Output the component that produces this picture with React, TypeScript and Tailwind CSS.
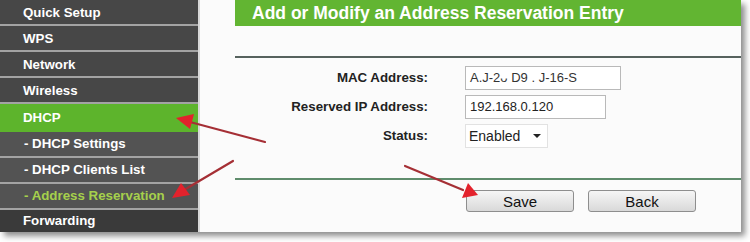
import React from 'react'

const font = { fontFamily: '"Liberation Sans", Arial, sans-serif' }

const topItems = ['Quick Setup', 'WPS', 'Network', 'Wireless']
const subItems = ['- DHCP Settings', '- DHCP Clients List', '- Address Reservation']

function Arrows() {
  return (
    <svg className="pointer-events-none absolute left-0 top-0" width="750" height="242" viewBox="0 0 750 242">
      <g stroke="#a52f35" strokeWidth="2.2" strokeLinecap="round">
        <line x1="265" y1="142" x2="190" y2="122" />
        <line x1="233" y1="161" x2="184" y2="190" />
        <line x1="405" y1="166" x2="463" y2="190" />
      </g>
      <g fill="#e3222c">
        <polygon points="176,118 194,114 190,129" />
        <polygon points="172,198 181,183 190,195" />
        <polygon points="478,195 462,198 468,183" />
      </g>
    </svg>
  )
}

export default function App() {
  return (
    <div className="relative h-[242px] w-[750px] overflow-hidden bg-white" style={font}>
      <div className="flex h-[232px] w-[741px] shadow-[4px_4px_6px_rgba(0,0,0,0.45)]">
        {/* sidebar */}
        <div className="flex w-[198px] flex-col bg-[#3d3d3d] text-[13.3px] font-bold text-white">
          {topItems.map((t) => (
            <div key={t} className="flex h-[26px] items-center border-b-2 border-[#a3a3a3] bg-[#474747] pl-[23px] pt-[1px]">
              {t}
            </div>
          ))}
          <div className="flex h-[28px] items-center bg-[#5db42c] pl-[23px]">DHCP</div>
          {subItems.map((t, i) => (
            <div
              key={t}
              className={
                i === 2
                  ? 'flex h-[26px] items-center border-b-2 border-[#a3a3a3] bg-[#535353] pl-[24px] text-[#a6d04c]'
                  : 'flex h-[26px] items-center border-b-2 border-[#a3a3a3] bg-[#535353] pl-[24px]'
              }
            >
              {t}
            </div>
          ))}
          <div className="flex h-[22px] items-center bg-[#3a3a3a] pl-[23px]">Forwarding</div>
        </div>
        <div className="w-[2px] bg-[#d8d8d8]" />
        {/* content */}
        <div className="flex flex-1 flex-col bg-[#fbfbfb] pl-[35px]">
          <div className="flex h-[26px] items-center bg-[#62b532] pl-[17px] text-[17.5px] font-bold text-white">
            Add or Modify an Address Reservation Entry
          </div>
          <div className="mt-[30px] h-[2px] bg-[#56625e]" />
          <div className="mt-[8px] flex flex-col gap-[5px] text-[13px]">
            <div className="flex items-center">
              <div className="w-[193px] text-right text-[13.3px] font-bold text-[#222]">MAC Address:</div>
              <div className="ml-[37px] flex h-[24px] w-[156px] items-center border border-[#b9b9b9] bg-white pl-[4px] text-[#333]">
                A.J-2ᴗ D9 . J-16-S
              </div>
            </div>
            <div className="flex items-center">
              <div className="w-[193px] text-right text-[13.3px] font-bold text-[#222]">Reserved IP Address:</div>
              <div className="ml-[37px] flex h-[24px] w-[141px] items-center border border-[#b9b9b9] bg-white pl-[4px] text-[#222]">
                192.168.0.120
              </div>
            </div>
            <div className="flex items-center">
              <div className="w-[193px] text-right text-[13.3px] font-bold text-[#222]">Status:</div>
              <div className="ml-[37px] flex h-[24px] w-[83px] items-center justify-between border border-[#e2e2e2] bg-white pl-[3px] pr-[6px] text-[14px] text-[#222]">
                Enabled
                <span className="h-0 w-0 border-x-[4px] border-t-[4px] border-x-transparent border-t-[#222]" />
              </div>
            </div>
          </div>
          <div className="mt-[30px] h-[2px] bg-[#5f8c6c]" />
          <div className="mt-[10px] flex gap-[14px] pl-[231px]">
            <button className="h-[22px] w-[108px] rounded-[3px] border border-[#8e8e8e] bg-gradient-to-b from-[#f6f6f6] to-[#d9d9d9] text-[15px] text-[#111]">
              Save
            </button>
            <button className="h-[22px] w-[108px] rounded-[3px] border border-[#8e8e8e] bg-gradient-to-b from-[#f6f6f6] to-[#d9d9d9] text-[15px] text-[#111]">
              Back
            </button>
          </div>
        </div>
      </div>
      <Arrows />
    </div>
  )
}
